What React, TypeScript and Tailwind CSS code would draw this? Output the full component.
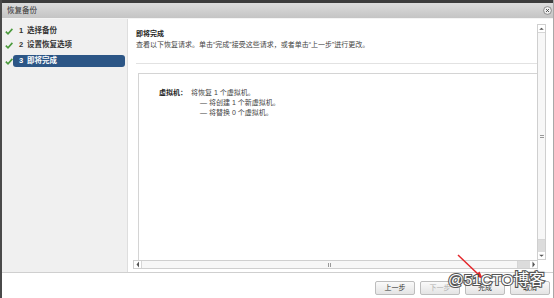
import React from "react"

const font = "font-['Liberation_Sans','Noto_Sans_CJK_SC',sans-serif]"

function Check() {
  return (
    <svg width="8" height="7" viewBox="0 0 8 7" className="ml-[3px] shrink-0">
      <path d="M0.8 3.6 L3 5.8 L7.4 0.9" fill="none" stroke="#4b9a3c" strokeWidth="1.6" />
    </svg>
  )
}

interface StepProps {
  num: number
  label: string
  active?: boolean
}

function Step(props: StepProps) {
  return (
    <div className="flex h-[12px] items-center">
      <Check />
      <div
        className={
          props.active
            ? "mr-[2px] flex h-[12px] flex-1 items-center rounded-[3px] bg-[#2c5686] pl-[6px] font-bold text-white"
            : "mr-[2px] flex h-[12px] flex-1 items-center pl-[6px] font-bold text-[#333]"
        }
      >
        <span className="w-[8px]">{props.num}</span>
        <span>{props.label}</span>
      </div>
    </div>
  )
}

function Arrow(props: { dir: "up" | "down" | "left" | "right" }) {
  const pts = {
    up: "1.5,4 4.5,1.5 7.5,4",
    down: "1.5,1.5 4.5,4 7.5,1.5",
    left: "4,1.5 1.5,4.5 4,7.5",
    right: "1.5,1.5 4,4.5 1.5,7.5",
  }[props.dir]
  const vertical = props.dir === "up" || props.dir === "down"
  return (
    <div
      className={
        vertical
          ? "flex h-[7px] w-full items-center justify-center"
          : "flex h-full w-[7px] items-center justify-center"
      }
    >
      <svg width={vertical ? 9 : 6} height={vertical ? 6 : 9} viewBox={vertical ? "0 0 9 6" : "0 0 6 9"}>
        <polygon points={pts} fill="#555" />
      </svg>
    </div>
  )
}

function Button(props: { label: string; disabled?: boolean }) {
  return (
    <div
      className={
        "flex h-[14px] w-[40px] items-center justify-center rounded-[2px] border border-[#bdbdbd] bg-gradient-to-b from-[#fafafa] to-[#e4e4e4] text-[7px] " +
        (props.disabled ? "text-[#b0b0b0]" : "text-[#333]")
      }
    >
      {props.label}
    </div>
  )
}

export default function App() {
  return (
    <div className={`relative flex h-[298px] w-[554px] flex-col overflow-hidden border-l-2 border-r border-[#4a4a4a] border-r-[#a8a8a8] bg-white text-[7px] ${font}`}>
      <div className="h-[3px] bg-[#3c3c3c]" />
      {/* title bar */}
      <div className="flex h-[16px] items-center justify-between border-b border-[#f4f4f4] bg-gradient-to-b from-[#dcdcdc] to-[#c4c4c4] pl-[5px] pr-[1px]">
        <span className="text-[7.5px] text-[#333]">恢复备份</span>
        <svg width="9" height="9" viewBox="0 0 9 9">
          <circle cx="4.5" cy="4.5" r="3.9" fill="#eee" stroke="#777" strokeWidth="0.8" />
          <path d="M3 3 L6 6 M6 3 L3 6" stroke="#444" strokeWidth="0.9" />
        </svg>
      </div>

      {/* body */}
      <div className="flex h-[253px]">
        <div className="flex w-[126px] flex-col border-r border-[#dedede] bg-[#f0f0f0] pt-[6px] text-[7.5px]">
          <Step num={1} label="选择备份" />
          <div className="mt-[2px]">
            <Step num={2} label="设置恢复选项" />
          </div>
          <div className="mt-[4px]">
            <Step num={3} label="即将完成" active />
          </div>
        </div>

        <div className="flex flex-1 flex-col pb-[3px] pl-[5px] pr-[7px] pt-[5px]">
          <div className="flex min-h-0 flex-1">
            {/* scroll content */}
            <div className="flex min-w-0 flex-1 flex-col overflow-hidden">
              <div className="pl-[3px] pt-[5px]">
                <div className="text-[7px] font-bold leading-[9px] text-[#222]">即将完成</div>
                <div className="mt-[2px] leading-[9px] text-[#444]">
                  查看以下恢复请求。单击“完成”接受这些请求，或者单击“上一步”进行更改。
                </div>
                <div className="mt-[14px] h-px bg-[#e2e2e2]" />
              </div>
              <div className="ml-[5px] mt-[9px] flex-1 border border-b-0 border-r-0 border-[#d4d4d4] pl-[20px] pt-[14px] leading-[10px] text-[#444]">
                <div className="flex">
                  <span className="w-[32px] font-bold text-[#222]">虚拟机：</span>
                  <span>将恢复 1 个虚拟机。</span>
                </div>
                <div className="pl-[41px]">— 将创建 1 个新虚拟机。</div>
                <div className="pl-[41px]">— 将替换 0 个虚拟机。</div>
              </div>
            </div>
            {/* vertical scrollbar */}
            <div className="flex w-[9px] flex-col border border-[#cfcfcf] bg-white">
              <Arrow dir="up" />
              <div className="flex flex-1 items-center justify-center border-y border-[#d6d6d6] bg-[#f7f7f7]">
                <div className="flex flex-col gap-px">
                  <div className="h-px w-[4px] bg-[#999]" />
                  <div className="h-px w-[4px] bg-[#999]" />
                </div>
              </div>
              <div className="h-[12px] bg-[#dcdcdc]" />
              <Arrow dir="down" />
            </div>
          </div>
          {/* horizontal scrollbar */}
          <div className="mr-[8px] flex h-[9px] border border-[#cfcfcf] bg-white">
            <Arrow dir="left" />
            <div className="flex flex-1 items-center justify-center border-x border-[#d6d6d6] bg-[#f7f7f7]">
              <div className="flex gap-px">
                <div className="h-[4px] w-px bg-[#999]" />
                <div className="h-[4px] w-px bg-[#999]" />
              </div>
            </div>
            <div className="w-[12px] bg-[#dcdcdc]" />
            <Arrow dir="right" />
          </div>
        </div>
      </div>

      {/* footer */}
      <div className="flex flex-1 justify-end gap-[5px] border-t border-[#cfcfcf] pr-[3px] pt-[8px]">
        <Button label="上一步" />
        <Button label="下一步" disabled />
        <Button label="完成" />
        <Button label="取消" />
      </div>

      {/* watermark overlay */}
      <svg className="absolute left-[452px] top-[252px]" width="34" height="30" viewBox="0 0 34 30">
        <path d="M4 3 L26 24" stroke="#e3262a" strokeWidth="1.5" />
        <polygon points="29,27 21,23.5 25.5,19.5" fill="#e3262a" />
      </svg>
      <div className="absolute left-[446px] top-[271px] text-[15.5px] leading-[18px] text-white [-webkit-text-stroke:2.2px_#555] [paint-order:stroke_fill] font-['Liberation_Sans','Noto_Sans_CJK_SC',sans-serif]">
        @51CTO博客
      </div>
    </div>
  )
}
